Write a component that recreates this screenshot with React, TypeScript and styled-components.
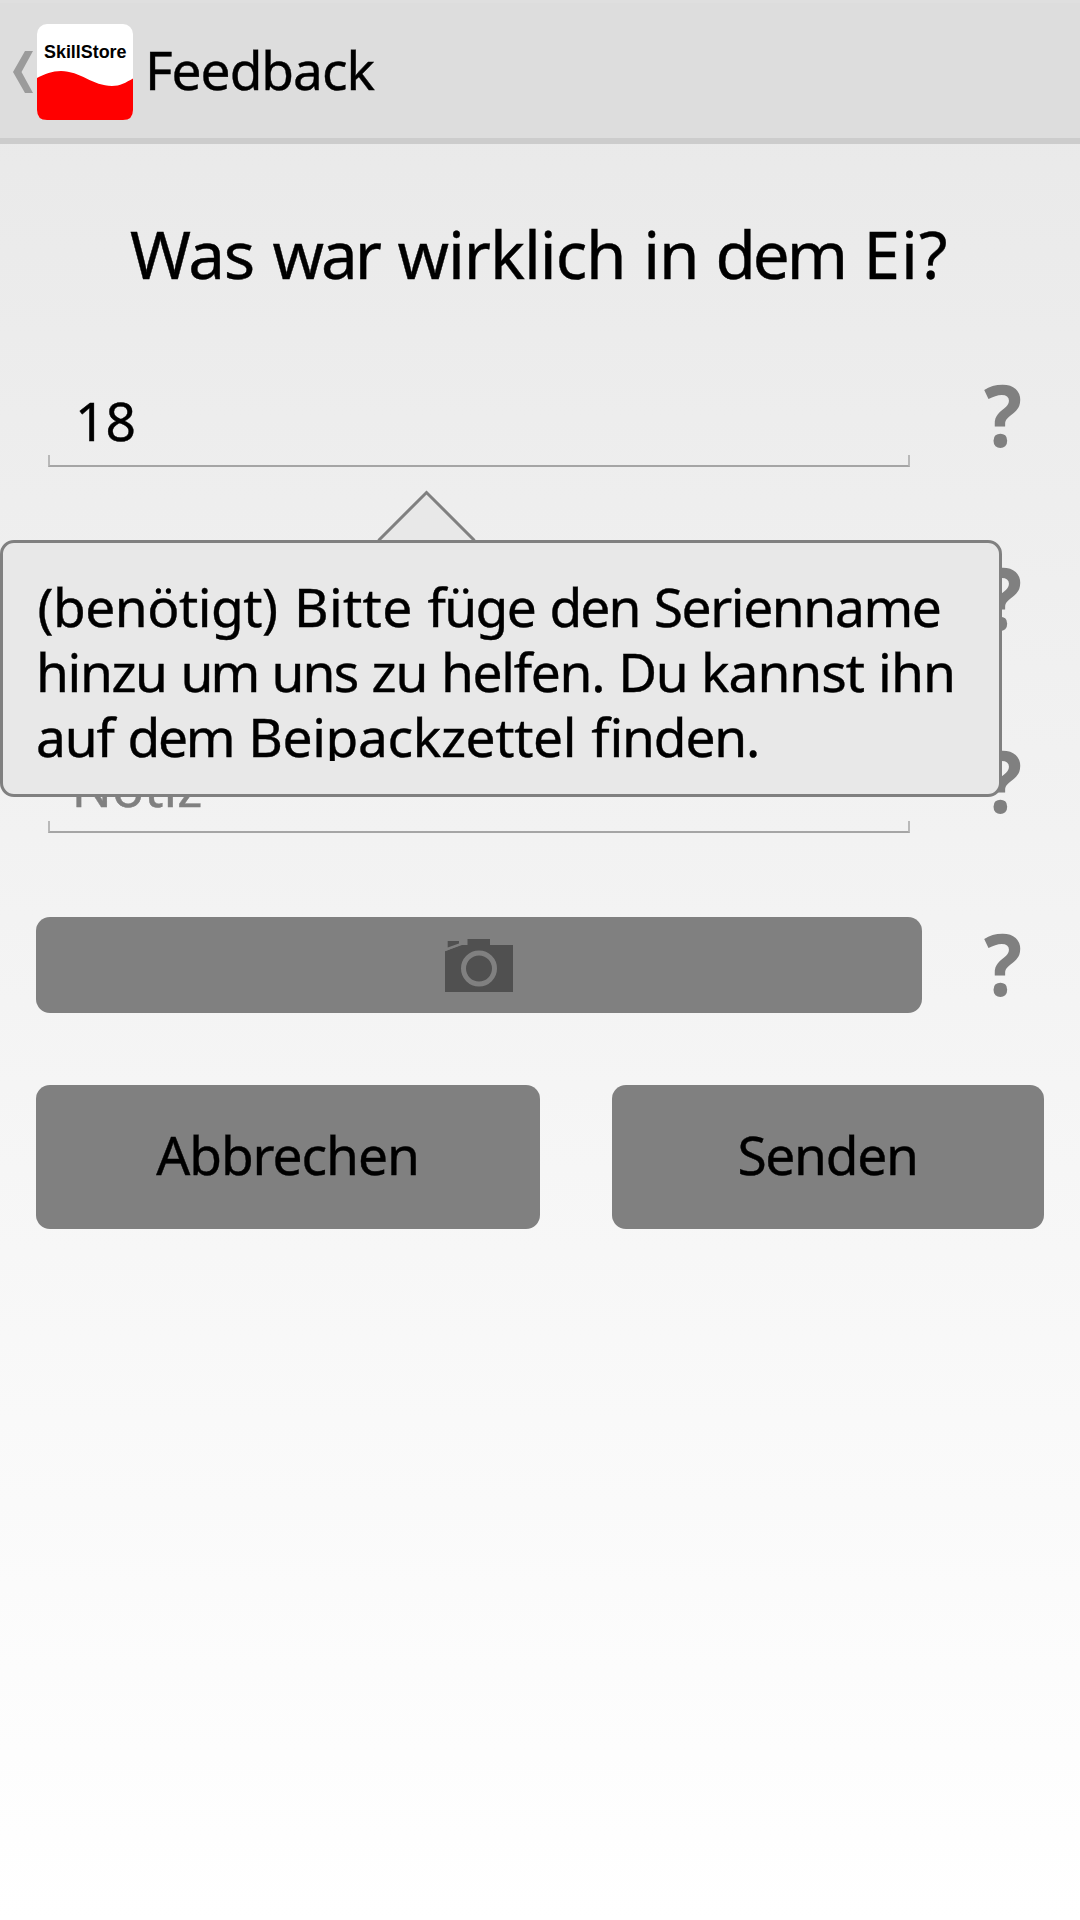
import React from "react";
import styled, { createGlobalStyle } from "styled-components";

const GlobalStyle = createGlobalStyle`
  * { box-sizing: border-box; }
  body { margin: 0; background: #fff; }
`;

const Screen = styled.div`
  position: relative;
  display: flex;
  flex-direction: column;
  width: 1080px;
  height: 1920px;
  overflow: hidden;
  background: linear-gradient(#e8e8e8, #ffffff);
  color: #000;
  font-family: "Noto Sans", "Open Sans", sans-serif;
  font-size: 53.3px;
  font-feature-settings: "liga" 1;
  -webkit-text-stroke: 0.4px currentColor;
`;

const Header = styled.header`
  display: flex;
  align-items: center;
  height: 144px;
  flex: none;
  padding-left: 13px;
  border-bottom: 6px solid #ccc;
  background: linear-gradient(#dfdfdf 0 3px, #ddd 3px);
`;

const BackArrow = styled.svg`
  width: 20px;
  height: 42px;
  margin: 6px 4px 0 0;
`;

const Logo = styled.svg`
  width: 96px;
  height: 96px;
  margin-top: 6px;
  -webkit-text-stroke: 0;
`;

const HeaderTitle = styled.span`
  margin: 2px 0 0 12px;
  line-height: 72px;
  letter-spacing: -1.05px;
`;

const Question = styled.h1`
  flex: none;
  height: 224px;
  margin: 0;
  padding: 2px 0 0 130px;
  font-size: 65.6px;
  font-weight: 400;
  line-height: 216px;
  white-space: nowrap;
`;

const Form = styled.div`
  display: flex;
  flex-direction: column;
  gap: 84px;
  padding: 0 36px;
`;

const Row = styled.div`
  display: flex;
  align-items: flex-start;
  height: 99px;
`;

const Field = styled.div<{ $placeholder?: boolean }>`
  display: flex;
  flex-direction: column;
  justify-content: flex-end;
  width: 862px;
  height: 99px;
  margin: 0 12px;
  color: ${(p) => (p.$placeholder ? "#808080" : "#000")};
`;

const FieldText = styled.span<{ $indent: number }>`
  height: 70px;
  padding-left: ${(p) => p.$indent}px;
  line-height: 72px;
`;

const Underline = styled.div`
  height: 12px;
  border: 2px solid #b9b9b9;
  border-top: 0;
  border-bottom-color: #a5a5a5;
`;

const Help = styled.span`
  height: 91px;
  margin-left: 62px;
  color: #808080;
  font-family: "Open Sans", sans-serif;
  font-size: 86px;
  font-weight: 700;
  line-height: 91px;
  transform: scaleX(0.93);
  transform-origin: left;
  -webkit-text-stroke: 0;
`;

const CameraButton = styled.button`
  display: flex;
  align-items: center;
  justify-content: center;
  flex: none;
  width: 886px;
  height: 96px;
  padding: 0;
  border: 0;
  border-radius: 14px;
  background: #808080;
`;

const Actions = styled.div`
  display: flex;
  gap: 72px;
  margin-top: 69px;
  padding: 0 36px;
`;

const ActionButton = styled.button<{ $width: number; $tracking: number }>`
  width: ${(p) => p.$width}px;
  height: 144px;
  padding: 0 1px 5px 0;
  border: 0;
  border-radius: 14px;
  background: #808080;
  color: #000;
  font: inherit;
  letter-spacing: ${(p) => p.$tracking}px;
`;

const Tooltip = styled.div`
  position: absolute;
  left: 0;
  top: 540px;
  width: 1002px;
  height: 257px;
  padding: 31px 0 0 33px;
  border: 3px solid #808080;
  border-radius: 14px;
  background: #e8e8e8;
`;

const TooltipArrow = styled.svg`
  position: absolute;
  left: 373px;
  top: -53px;
  width: 102px;
  height: 50px;
`;

const TooltipText = styled.div`
  height: 187px;
  overflow: hidden;
  line-height: 65px;
  white-space: nowrap;
`;

const Line = styled.div<{ $indent?: number }>`
  padding-left: ${(p) => p.$indent ?? 0}px;
`;

const Word = styled.span<{ $tracking: number; $gap: number }>`
  letter-spacing: ${(p) => p.$tracking}px;
  word-spacing: ${(p) => p.$gap}px;
`;

type SpacedWord = [text: string, tracking: number, gap?: number];

const question: SpacedWord[] = [
  ["Was ", -1.4, 3],
  ["war ", -3, 4.6],
  ["wirklich ", -1.05, 1.6],
  ["in ", -1.2, 1.5],
  ["dem ", -3.1, 4.6],
  ["Ei?", 1.1],
];

const hint: SpacedWord[][] = [
  [["(benötigt) ", -0.5, 3.2], ["Bitte ", 0.3, 0.8], ["füge ", -1.6, 2], ["den ", -1.9, 2.2], ["Serienname", -1.4]],
  [["hinzu ", -1.4, 1.4], ["um ", -2.8, 2.7], ["uns ", -1.8, 2], ["zu ", -1.1, 0.9], ["helfen. ", -1.3, 1.6], ["Du ", -1.4, 1.2], ["kannst ", -1, 1], ["ihn", -0.8]],
  [["auf ", -1.2, 1.2], ["dem ", -2.2, 3], ["Beipackzettel ", -0.35, 1.5], ["finden.", -1.2]],
];

const Words = ({ words }: { words: SpacedWord[] }) => (
  <>
    {words.map(([text, tracking, gap = 0]) => (
      <Word key={text} $tracking={tracking} $gap={gap}>
        {text}
      </Word>
    ))}
  </>
);

const FormField = ({ text, indent = 24, placeholder }: { text: string; indent?: number; placeholder?: boolean }) => (
  <Row>
    <Field $placeholder={placeholder}>
      <FieldText $indent={indent}>{text}</FieldText>
      <Underline />
    </Field>
    <Help>?</Help>
  </Row>
);

export default function App() {
  return (
    <>
      <GlobalStyle />
      <Screen>
        <Header>
          <BackArrow viewBox="0 0 20 42">
            <path d="M12 0H20L8.500 21L20 42H12L0 21Z" fill="#9b9b9b" />
          </BackArrow>
          <Logo viewBox="0 0 96 96">
            <rect width="96" height="96" rx="10" fill="#fff" />
            <path
              d="M0 54C8 50 15 47 24 47C43 47 56 62 75 62C83 62 89 58.500 96 54.500V86Q96 96 86 96H10Q0 96 0 86Z"
              fill="#f00"
            />
            <text x="7" y="33.600" fontFamily="Liberation Sans, Arial, sans-serif" fontWeight="700" fontSize="17.900">
              SkillStore
            </text>
          </Logo>
          <HeaderTitle>Feedback</HeaderTitle>
        </Header>

        <Question>
          <Words words={question} />
        </Question>

        <Form>
          <FormField text="18" indent={27} />
          <FormField text="" />
          <FormField text="Notiz" indent={23.5} placeholder />
          <Row>
            <CameraButton aria-label="Kamera">
              <svg width="68" height="53" viewBox="0 0 68 53">
                <path d="M0 12L17 6H22.500V0H45V6H68V53H0Z" fill="#505050" />
                <path d="M2.700 2H14V4.500L2.700 8.500Z" fill="#505050" />
                <path d="M0 11.500L16 5" stroke="#808080" strokeWidth="1.500" />
                <circle cx="34" cy="29.500" r="15.500" fill="none" stroke="#808080" strokeWidth="5" />
              </svg>
            </CameraButton>
            <Help>?</Help>
          </Row>
        </Form>

        <Actions>
          <ActionButton $width={504} $tracking={-1.05}>Abbrechen</ActionButton>
          <ActionButton $width={432} $tracking={-1.3}>Senden</ActionButton>
        </Actions>

        <Tooltip>
          <TooltipArrow viewBox="0 0 102 50">
            <path d="M2.500 50.500L50.500 2.500L98.500 50.500" fill="#e8e8e8" stroke="#808080" strokeWidth="3" />
          </TooltipArrow>
          <TooltipText>
            {hint.map((words, i) => (
              <Line key={i} $indent={i === 0 ? 1.5 : 0}>
                <Words words={words} />
              </Line>
            ))}
          </TooltipText>
        </Tooltip>
      </Screen>
    </>
  );
}
